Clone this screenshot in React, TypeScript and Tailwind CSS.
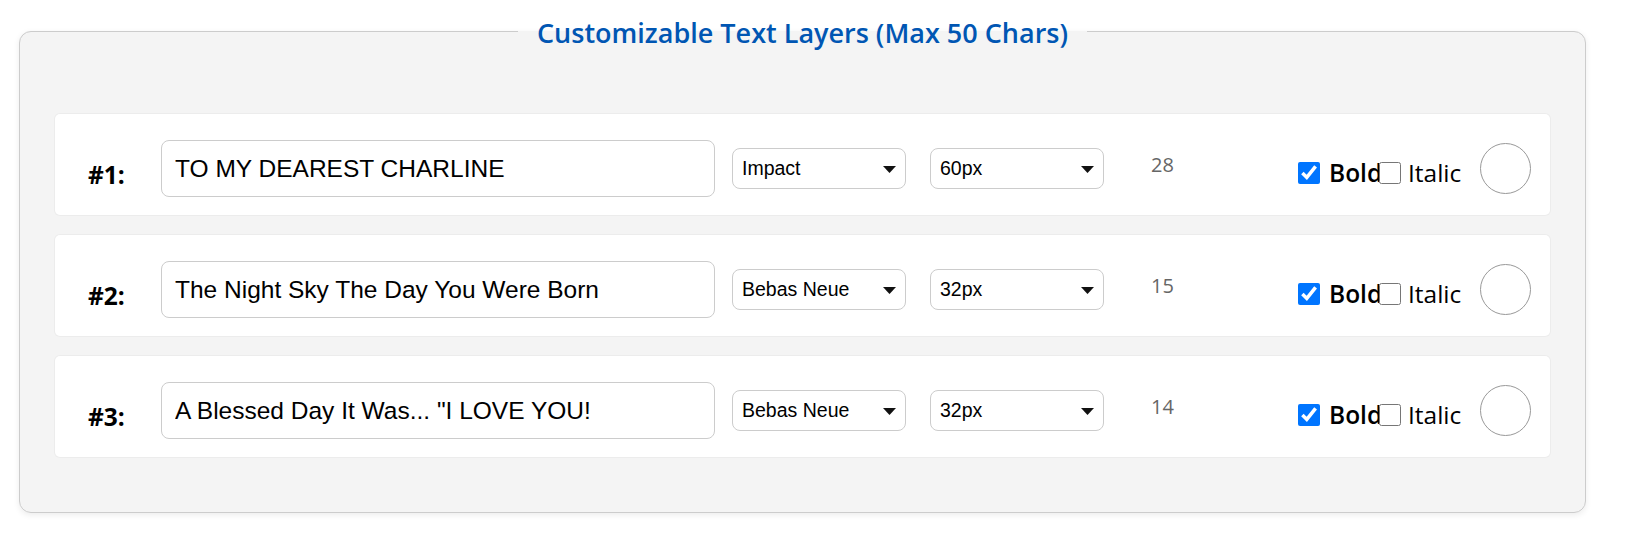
import React from 'react';

const MAX_CHARS = 50;

const layers = [
  { text: 'TO MY DEAREST CHARLINE', font: 'Impact', size: '60px' },
  { text: 'The Night Sky The Day You Were Born', font: 'Bebas Neue', size: '32px' },
  { text: 'A Blessed Day It Was... "I LOVE YOU!', font: 'Bebas Neue', size: '32px' },
];

const fontOptions = ['Impact', 'Bebas Neue', 'Arial', 'Georgia'];
const sizeOptions = ['24px', '32px', '48px', '60px'];

function Dropdown({ value, options }: { value: string; options: string[] }) {
  return (
    <div className="relative w-[174px] h-[41px] shrink-0">
      <select
        defaultValue={value}
        className="appearance-none w-full h-full rounded-[8px] border border-[#ccc] bg-white pl-[9px] pr-[30px] text-[19.5px] text-black font-['Liberation_Sans',Arial,sans-serif] outline-none"
      >
        {options.map((o) => (
          <option key={o}>{o}</option>
        ))}
      </select>
      {/* seta do select */}
      <svg
        className="pointer-events-none absolute right-[10px] top-[18px]"
        width="13"
        height="7"
        viewBox="0 0 13 7"
      >
        <path d="M0 0h13L6.5 7z" fill="#111" />
      </svg>
    </div>
  );
}

function LayerRow({ index, text, font, size }: { index: number; text: string; font: string; size: string }) {
  return (
    <div className="flex items-center rounded-[5px] bg-white pl-[33px] pr-[19px] pt-[26px] pb-[18px] shadow-[0_0_0_1px_#ececec]">
      <span className="w-[73px] shrink-0 mt-[14px] text-[24.5px] leading-none font-bold text-black">
        #{index}:
      </span>
      <input
        defaultValue={text}
        maxLength={MAX_CHARS}
        className="w-[554px] h-[57px] shrink-0 rounded-[8px] border border-[#ccc] bg-white px-[13px] text-[24.5px] text-black font-['Liberation_Sans',Arial,sans-serif] outline-none"
      />
      <div className="ml-[17px]">
        <Dropdown value={font} options={fontOptions} />
      </div>
      <div className="ml-[24px]">
        <Dropdown value={size} options={sizeOptions} />
      </div>
      <span className="w-[147px] shrink-0 ml-[47px] mb-[8px] text-[20px] leading-none text-[#666]">
        {MAX_CHARS - text.length}
      </span>
      <div className="flex items-center mt-[9px] text-[24.5px] leading-none text-black">
        <input type="checkbox" defaultChecked className="w-[22px] h-[22px] shrink-0 accent-[#0075ff]" />
        <span className="ml-[9px] w-[50px] whitespace-nowrap font-semibold">Bold</span>
        <input type="checkbox" className="w-[22px] h-[22px] shrink-0" />
        <span className="ml-[7px] whitespace-nowrap">Italic</span>
      </div>
      <div className="ml-auto w-[51px] h-[51px] shrink-0 rounded-full border border-[#999] bg-white" />
    </div>
  );
}

export default function App() {
  return (
    <div className="min-h-screen bg-white pt-[12px] pl-[19px] font-['Open_Sans',sans-serif]">
      <fieldset className="w-[1567px] rounded-[12px] border border-[#ccc] bg-[#f4f4f4] px-[35px] pt-[64px] pb-[55px] shadow-[0_2px_6px_rgba(0,0,0,0.08)]">
        <legend className="mx-auto px-[19px] pt-[4px] text-[27px] leading-[34px] font-semibold text-[#0056b3]">
          Customizable Text Layers (Max 50 Chars)
        </legend>
        <div className="flex flex-col gap-[20px]">
          {layers.map((l, i) => (
            <LayerRow key={i} index={i + 1} text={l.text} font={l.font} size={l.size} />
          ))}
        </div>
      </fieldset>
    </div>
  );
}
